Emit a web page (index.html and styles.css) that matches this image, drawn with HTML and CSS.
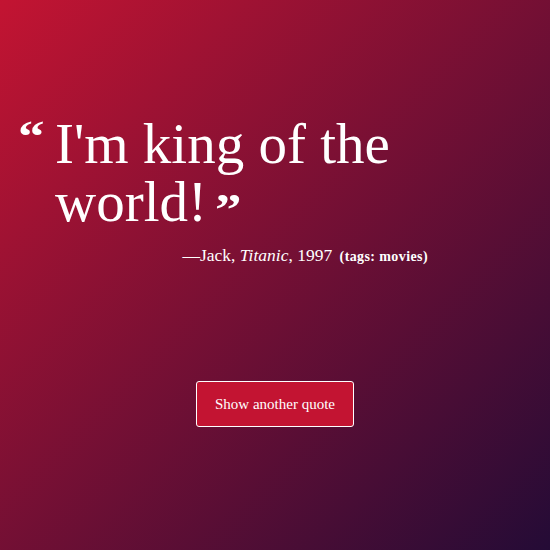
FILE: index.html
```html
<!DOCTYPE html>
<html lang="en">
<head>
<meta charset="utf-8">
<title>Quote</title>
<link rel="stylesheet" href="styles.css">
</head>
<body>
<main class="page">
  <figure class="quote">
    <blockquote class="quote-body">
      <span class="mark mark-open">“</span>
      <p class="quote-text">I'm king of the world!<span class="mark mark-close">”</span></p>
    </blockquote>
    <figcaption class="attribution">—Jack, <cite class="work">Titanic</cite>, 1997 <span class="tags">(tags: movies)</span></figcaption>
  </figure>
  <div class="actions">
    <button class="btn" type="button">Show another quote</button>
  </div>
</main>
</body>
</html>
```

FILE: styles.css
```css
html, body {
  margin: 0;
  padding: 0;
  height: 100%;
}

body {
  background: linear-gradient(to bottom right, #c31432, #240b36);
  color: #fff;
  font-family: "Liberation Serif", "Times New Roman", serif;
}

.page {
  display: flex;
  flex-direction: column;
  min-height: 100%;
  padding-top: 115px;
  box-sizing: border-box;
}

.quote {
  margin: 0 0 0 20px;
  width: 408px;
  display: flex;
  flex-direction: column;
}

.quote-body {
  margin: 0;
  display: flex;
  align-items: flex-start;
}

.mark {
  display: inline-block;
  font-weight: 700;
  font-size: 52px;
  line-height: 30px;
  transform: scale(1.02, 0.85);
}

.mark-open {
  width: 37px;
  flex: none;
  margin-left: -2px;
  margin-top: 9px;
  transform-origin: left top;
}

.quote-text {
  margin: 0;
  font-size: 57px;
  line-height: 58px;
}

.mark-close {
  margin-left: 8px;
  vertical-align: -8px;
  transform-origin: left top;
}

.attribution {
  margin-top: 14px;
  text-align: right;
  font-size: 17.5px;
  line-height: 20px;
}

.work {
  font-style: italic;
}

.tags {
  margin-left: 3px;
  font-size: 14px;
  font-weight: 700;
  letter-spacing: 0.4px;
}

.actions {
  display: flex;
  justify-content: center;
  margin-top: 114px;
}

.btn {
  font-family: inherit;
  font-size: 15px;
  line-height: 18px;
  color: #fff;
  background: #c31432;
  border: 1px solid #fff;
  border-radius: 3px;
  padding: 13px 18px;
  cursor: pointer;
}
```
